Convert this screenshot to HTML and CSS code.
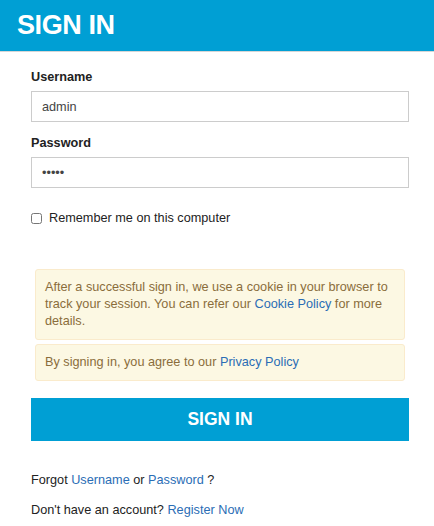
FILE: index.html
```html
<!DOCTYPE html>
<html>
<head>
<meta charset="utf-8">
<link rel="stylesheet" href="styles.css">
</head>
<body>
<header class="topbar"><h1 class="title">SIGN IN</h1></header>
<main class="content">
  <form class="form">
    <div class="field">
      <label class="label">Username</label>
      <input class="input" type="text" value="admin">
    </div>
    <div class="field">
      <label class="label">Password</label>
      <input class="input" type="password" value="admin">
    </div>
    <label class="remember"><input type="checkbox" class="check"> Remember me on this computer</label>
    <div class="alerts">
      <div class="alert">After a successful sign in, we use a cookie in your browser to track your session. You can refer our <a class="link" href="#">Cookie Policy</a> for more details.</div>
      <div class="alert">By signing in, you agree to our <a class="link" href="#">Privacy Policy</a></div>
    </div>
    <button class="btn" type="button">SIGN IN</button>
    <p class="note">Forgot <a class="link" href="#">Username</a> or <a class="link" href="#">Password</a> ?</p>
    <p class="note">Don't have an account? <a class="link" href="#">Register Now</a></p>
  </form>
</main>
</body>
</html>
```
FILE: styles.css
```css
* { box-sizing: border-box; }
body {
  margin: 0;
  font-family: "Liberation Sans", Arial, sans-serif;
  font-size: 12.7px;
  color: #222;
  background: #fff;
}
.topbar {
  height: 52px;
  background: #009fd4;
  border-bottom: 1px solid #d6d6d6;
  display: flex;
  align-items: center;
  padding-left: 17px;
}
.title {
  margin: 0;
  color: #fff;
  font-size: 27px;
  font-weight: bold;
  letter-spacing: -0.4px;
}
.content { padding: 15px 25px 0 31px; }
.form { display: flex; flex-direction: column; }
.field { display: flex; flex-direction: column; margin-bottom: 11px; }
.label {
  font-weight: bold;
  font-size: 12.7px;
  line-height: 20px;
  margin-bottom: 4px;
  color: #222;
}
.input {
  height: 31px;
  border: 1px solid #ccc;
  padding: 0 10px;
  font-family: inherit;
  font-size: 12.7px;
  color: #444;
  outline: none;
}
.remember {
  display: flex;
  align-items: center;
  gap: 7px;
  margin-top: 12px;
  color: #222;
}
.check { margin: 0; width: 11px; height: 11px; }
.alerts { display: flex; flex-direction: column; gap: 4px; margin: 44px 4px 0 4px; }
.alert {
  background: #fcf8e3;
  border: 1px solid #faebcc;
  border-radius: 3px;
  color: #8a6d3b;
  padding: 9px 9px 9px 9px;
  line-height: 17px;
}
.link { color: #2a6db5; text-decoration: none; }
.btn {
  margin-top: 17px;
  height: 43px;
  border: none;
  background: #009fd4;
  color: #fff;
  font-family: inherit;
  font-size: 17.5px;
  font-weight: bold;
}
.note { margin: 0; line-height: 17px; }
.btn + .note { margin-top: 31px; }
.note + .note { margin-top: 13px; }
```
